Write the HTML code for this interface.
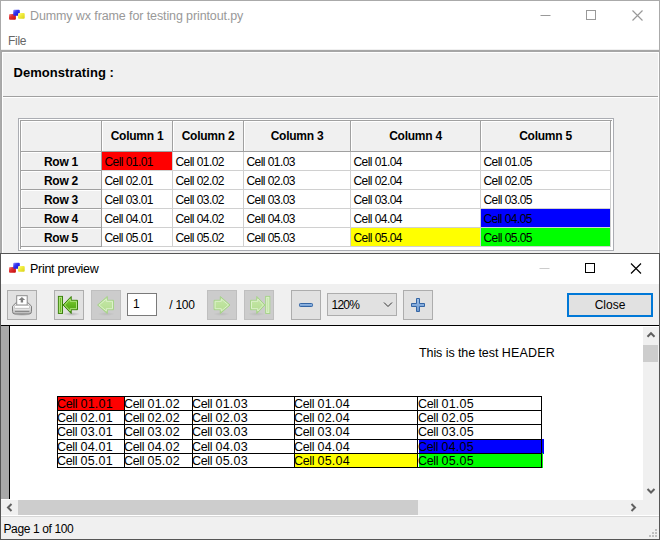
<!DOCTYPE html>
<html><head><meta charset="utf-8"><title>Print preview</title>
<style>
*{box-sizing:border-box;margin:0;padding:0}
html,body{width:660px;height:540px;overflow:hidden;background:#f0f0f0;font-family:"Liberation Sans",sans-serif;font-size:12px;color:#000}
.abs{position:absolute}
#w1{position:absolute;left:0;top:0;width:660px;height:253px;background:#f0f0f0;border-top:1px solid #aaa;border-left:1px solid #aaa;border-right:1px solid #aaa}
#t1{position:absolute;left:0;top:0;width:658px;height:50px;background:#fff}
.title{position:absolute;left:29px;top:8px;font-size:12.5px;color:#999;white-space:nowrap;letter-spacing:-0.11px}
.menu{position:absolute;left:7px;top:33px;font-size:12px;color:#666;letter-spacing:-0.3px}
.hline{position:absolute;height:1px;background:#a0a0a0}
#demo{position:absolute;left:12.5px;top:64px;letter-spacing:0.05px;font-weight:bold;font-size:13px;white-space:nowrap}
#grid{position:absolute;left:17px;top:117px;width:596px;height:133px;border:1px solid #abadb3;background:#fff}
#gin{position:absolute;left:1px;top:1px;width:592px;height:129px;background:#fff;border-left:1px solid #a0a0a0;border-top:1px solid #a0a0a0}
.gh{position:absolute;letter-spacing:-0.25px;background:#f0f0f0;box-shadow:inset 1px 1px 0 #fff;border-right:1px solid #a0a0a0;border-bottom:1px solid #a0a0a0;font-weight:bold;font-size:12px;text-align:center;white-space:nowrap}
.gc{position:absolute;background:#fff;border-right:1px solid #d0d0d0;border-bottom:1px solid #d0d0d0;font-size:12px;padding-left:2.5px;line-height:20px;white-space:nowrap;letter-spacing:-0.56px}
#w2{position:absolute;left:0;top:253px;width:660px;height:287px;background:#f0f0f0;border:1px solid #555}
#t2{position:absolute;left:0;top:0;width:658px;height:30px;background:#fff}
.tb{position:absolute;top:36px;width:30px;height:30px;border:1px solid #adadad;background:#e1e1e1}
.tb.dis{background:#cccccc;border-color:#bfbfbf}
.tb svg{position:absolute;left:0;top:0}
.pc{position:absolute;letter-spacing:-0.17px;font-size:12.5px;white-space:nowrap;line-height:14px;height:14px}
.pl{position:absolute;background:#000}
.pc .a{letter-spacing:-0.35px}.pc .b{letter-spacing:0.24px}
</style></head><body>
<div id="w1">
 <div id="t1"></div>
 <svg class="abs" style="left:8px;top:7px" width="18" height="16" viewBox="0 0 18 16">
  <defs>
   <linearGradient id="ir" x1="0" y1="0" x2="1" y2="1"><stop offset="0" stop-color="#f49a9a"/><stop offset="0.35" stop-color="#e03434"/><stop offset="1" stop-color="#c40808"/></linearGradient>
   <linearGradient id="ib" x1="0" y1="0" x2="1" y2="1"><stop offset="0" stop-color="#a0a0ff"/><stop offset="0.35" stop-color="#3838f0"/><stop offset="1" stop-color="#0808d8"/></linearGradient>
   <linearGradient id="iy" x1="0" y1="0" x2="1" y2="1"><stop offset="0" stop-color="#ffffb0"/><stop offset="0.35" stop-color="#f4f048"/><stop offset="1" stop-color="#d8d010"/></linearGradient>
  </defs>
  <rect x="0" y="6" width="6.900" height="5.800" rx="1" fill="url(#ir)"/>
  <rect x="4.200" y="1.800" width="6.600" height="6" rx="1" fill="url(#ib)"/>
  <rect x="9" y="4.900" width="6.700" height="5.900" rx="1" fill="url(#iy)"/>
 </svg>
 <div class="title">Dummy wx frame for testing printout.py</div>
 <svg class="abs" style="left:530px;top:-1px" width="128" height="30" viewBox="0 0 128 30">
  <g stroke="#999" stroke-width="1" fill="none">
   <path d="M9.5 15.5h10" stroke="#999"/><rect x="55.500" y="10.500" width="9" height="9"/><path d="M101.5 10.500l10 10M111.5 10.500l-10 10" stroke-width="1.150"/>
  </g>
 </svg>
 <div class="menu">File</div>
 <div class="abs" style="left:0;top:48px;width:658px;height:1px;background:#f0f0f0"></div>
 <div class="abs" style="left:0;top:49px;width:658px;height:2px;background:#a6a6a6"></div>
 <div class="abs" style="left:0;top:49px;width:1px;height:204px;background:#a6a6a6"></div>
 <div class="abs" style="left:1px;top:51px;width:657px;height:1px;background:#fff"></div>
 <div class="abs" style="left:1px;top:51px;width:1px;height:202px;background:#fff"></div>
 <div class="abs" style="left:657px;top:51px;width:1px;height:202px;background:#fff"></div>
 <div id="demo">Demonstrating :</div>
 <div class="hline" style="left:2px;top:95px;width:655px"></div>
 <div class="hline" style="left:2px;top:96px;width:655px;background:#fff"></div>
 <div id="grid"><div id="gin">
  <div class="gh" style="left:0;top:0;width:81px;height:31px"></div>
  <div class="gh" style="left:81px;top:0;width:71px;height:31px;line-height:30px">Column 1</div>
  <div class="gh" style="left:152px;top:0;width:71px;height:31px;line-height:30px">Column 2</div>
  <div class="gh" style="left:223px;top:0;width:107px;height:31px;line-height:30px">Column 3</div>
  <div class="gh" style="left:330px;top:0;width:130px;height:31px;line-height:30px">Column 4</div>
  <div class="gh" style="left:460px;top:0;width:130px;height:31px;line-height:30px">Column 5</div>
  <div class="gh" style="left:0;top:31px;width:81px;height:19px;line-height:20px">Row 1</div>
  <div class="gc" style="left:81px;top:31px;width:71px;height:19px;background:#ff0000">Cell 01.01</div>
  <div class="gc" style="left:152px;top:31px;width:71px;height:19px">Cell 01.02</div>
  <div class="gc" style="left:223px;top:31px;width:107px;height:19px">Cell 01.03</div>
  <div class="gc" style="left:330px;top:31px;width:130px;height:19px">Cell 01.04</div>
  <div class="gc" style="left:460px;top:31px;width:130px;height:19px">Cell 01.05</div>
  <div class="gh" style="left:0;top:50px;width:81px;height:19px;line-height:20px">Row 2</div>
  <div class="gc" style="left:81px;top:50px;width:71px;height:19px">Cell 02.01</div>
  <div class="gc" style="left:152px;top:50px;width:71px;height:19px">Cell 02.02</div>
  <div class="gc" style="left:223px;top:50px;width:107px;height:19px">Cell 02.03</div>
  <div class="gc" style="left:330px;top:50px;width:130px;height:19px">Cell 02.04</div>
  <div class="gc" style="left:460px;top:50px;width:130px;height:19px">Cell 02.05</div>
  <div class="gh" style="left:0;top:69px;width:81px;height:19px;line-height:20px">Row 3</div>
  <div class="gc" style="left:81px;top:69px;width:71px;height:19px">Cell 03.01</div>
  <div class="gc" style="left:152px;top:69px;width:71px;height:19px">Cell 03.02</div>
  <div class="gc" style="left:223px;top:69px;width:107px;height:19px">Cell 03.03</div>
  <div class="gc" style="left:330px;top:69px;width:130px;height:19px">Cell 03.04</div>
  <div class="gc" style="left:460px;top:69px;width:130px;height:19px">Cell 03.05</div>
  <div class="gh" style="left:0;top:88px;width:81px;height:19px;line-height:20px">Row 4</div>
  <div class="gc" style="left:81px;top:88px;width:71px;height:19px">Cell 04.01</div>
  <div class="gc" style="left:152px;top:88px;width:71px;height:19px">Cell 04.02</div>
  <div class="gc" style="left:223px;top:88px;width:107px;height:19px">Cell 04.03</div>
  <div class="gc" style="left:330px;top:88px;width:130px;height:19px">Cell 04.04</div>
  <div class="gc" style="left:460px;top:88px;width:130px;height:19px;background:#0000ff">Cell 04.05</div>
  <div class="gh" style="left:0;top:107px;width:81px;height:19px;line-height:20px">Row 5</div>
  <div class="gc" style="left:81px;top:107px;width:71px;height:19px">Cell 05.01</div>
  <div class="gc" style="left:152px;top:107px;width:71px;height:19px">Cell 05.02</div>
  <div class="gc" style="left:223px;top:107px;width:107px;height:19px">Cell 05.03</div>
  <div class="gc" style="left:330px;top:107px;width:130px;height:19px;background:#ffff00">Cell 05.04</div>
  <div class="gc" style="left:460px;top:107px;width:130px;height:19px;background:#00ff00">Cell 05.05</div>
 </div></div>
</div>
<div id="w2">
 <div id="t2"></div>
 <svg class="abs" style="left:8px;top:7px" width="18" height="16" viewBox="0 0 18 16">
  
  <rect x="0" y="6" width="6.900" height="5.800" rx="1" fill="url(#ir)"/>
  <rect x="4.200" y="1.800" width="6.600" height="6" rx="1" fill="url(#ib)"/>
  <rect x="9" y="4.900" width="6.700" height="5.900" rx="1" fill="url(#iy)"/>
 </svg>
 <div class="title" style="color:#000;letter-spacing:-0.29px">Print preview</div>
 <svg class="abs" style="left:529px;top:-1px" width="128" height="30" viewBox="0 0 128 30">
  <g stroke="#000" stroke-width="1" fill="none">
   <path d="M9.5 15.5h10" stroke="#ccc"/><rect x="55.500" y="10.500" width="9" height="9"/><path d="M101.0 10.500l10 10M111.0 10.500l-10 10" stroke-width="1.150"/>
  </g>
 </svg>
 <svg width="0" height="0" style="position:absolute"><defs>
<linearGradient id="gg" x1="0" y1="0" x2="0" y2="1"><stop offset="0" stop-color="#8ad63f"/><stop offset="0.5" stop-color="#62b620"/><stop offset="1" stop-color="#4a9e0e"/></linearGradient>
<linearGradient id="gd" x1="0" y1="0" x2="0" y2="1"><stop offset="0" stop-color="#c6e8a8"/><stop offset="1" stop-color="#b3dc90"/></linearGradient>
<linearGradient id="pb" x1="0" y1="0" x2="0" y2="1"><stop offset="0" stop-color="#f4f4f4"/><stop offset="0.6" stop-color="#d4d4d4"/><stop offset="1" stop-color="#b8b8b8"/></linearGradient>
<linearGradient id="bl" x1="0" y1="0" x2="0" y2="1"><stop offset="0" stop-color="#9fc0e8"/><stop offset="1" stop-color="#6a97cf"/></linearGradient>
<radialGradient id="sh"><stop offset="0" stop-color="#000" stop-opacity="0.25"/><stop offset="1" stop-color="#000" stop-opacity="0"/></radialGradient>
</defs></svg>
 <div class="tb" style="left:6px"><svg width="30" height="30" viewBox="0 0 30 30"><g transform="translate(-1,-1)"><ellipse cx="15" cy="24.300" rx="9" ry="1.800" fill="url(#sh)"/><path d="M5.500 16.200L9.300 12.500H20.700L24.500 16.200V21.500Q24.500 24 22 24H8Q5.500 24 5.500 21.500Z" fill="url(#pb)" stroke="#7e7e7e" stroke-width="1" stroke-linejoin="round"/><rect x="9.700" y="5.700" width="10.500" height="9.300" fill="#fff" stroke="#8c8c8c" stroke-width="1"/><path d="M14.900 6.900l3.300 3.100h-2.100v2.500h-2.400V10h-2.100z" fill="#808080"/><rect x="7.500" y="15.500" width="15" height="2.800" rx="0.800" fill="#fff" stroke="#a8a8a8" stroke-width="0.600"/><path d="M8 21.300h14.300" stroke="#7a7a7a" stroke-width="1"/><path d="M7.500 19.700h15.300" stroke="#fff" stroke-width="0.700" opacity="0.700"/></g></svg></div>
 <div class="tb" style="left:53px"><svg width="30" height="30" viewBox="0 0 30 30"><g transform="translate(-1,-1)"><ellipse cx="17.6" cy="24" rx="8.500" ry="2" fill="url(#sh)" opacity="0.8"/><path d="M9.1 15L17.20 6.500V10.300H23.50V19.700H17.20V23.500Z" fill="url(#gg)" stroke="#3a7f0d" stroke-width="1" stroke-linejoin="round"/><path d="M10.6 15L16.20 9V11.300H22.50V18.700H16.20V21Z" fill="none" stroke="#aee57e" stroke-width="1" stroke-linejoin="round"/><rect x="4.4" y="6.400" width="4.100" height="17" fill="#6cbd2b" stroke="#3a7f0d" stroke-width="1"/><rect x="5.4" y="7.400" width="2.100" height="15" fill="none" stroke="#aee57e" stroke-width="1"/></g></svg></div>
 <div class="tb dis" style="left:90px"><svg width="30" height="30" viewBox="0 0 30 30"><g transform="translate(-1,-1)"><ellipse cx="15.1" cy="24" rx="8.500" ry="2" fill="url(#sh)" opacity="0.35"/><path d="M6.6 15L16.30 6.500V10.300H22.50V19.700H16.30V23.500Z" fill="url(#gd)" stroke="#a6d389" stroke-width="1" stroke-linejoin="round"/><path d="M8.1 15L15.30 9V11.300H21.50V18.700H15.30V21Z" fill="none" stroke="#dcf1cb" stroke-width="1" stroke-linejoin="round"/></g></svg></div>
 <div class="abs" style="left:126px;top:39px;width:30px;height:23px;background:#fff;border:1px solid #7a7a7a;padding:3px 0 0 5px;font-size:12px">1</div>
 <div class="abs" style="left:168.300px;top:44px;font-size:12px;letter-spacing:-0.26px">/ 100</div>
 <div class="tb dis" style="left:206px"><svg width="30" height="30" viewBox="0 0 30 30"><g transform="translate(-1,-1)"><ellipse cx="14.5" cy="24" rx="8.500" ry="2" fill="url(#sh)" opacity="0.35"/><path d="M23.0 15L13.30 6.500V10.300H7.10V19.700H13.30V23.500Z" fill="url(#gd)" stroke="#a6d389" stroke-width="1" stroke-linejoin="round"/><path d="M21.5 15L14.30 9V11.300H8.10V18.700H14.30V21Z" fill="none" stroke="#dcf1cb" stroke-width="1" stroke-linejoin="round"/></g></svg></div>
 <div class="tb dis" style="left:243px"><svg width="30" height="30" viewBox="0 0 30 30"><g transform="translate(-1,-1)"><ellipse cx="12.399999999999999" cy="24" rx="8.500" ry="2" fill="url(#sh)" opacity="0.35"/><path d="M20.9 15L12.80 6.500V10.300H6.50V19.700H12.80V23.500Z" fill="url(#gd)" stroke="#a6d389" stroke-width="1" stroke-linejoin="round"/><path d="M19.4 15L13.80 9V11.300H7.50V18.700H13.80V21Z" fill="none" stroke="#dcf1cb" stroke-width="1" stroke-linejoin="round"/><rect x="21.7" y="6.400" width="4.100" height="17" fill="#c2e5a6" stroke="#a6d389" stroke-width="1"/><rect x="22.7" y="7.400" width="2.100" height="15" fill="none" stroke="#dcf1cb" stroke-width="1"/></g></svg></div>
 <div class="tb" style="left:290px"><svg width="30" height="30" viewBox="0 0 30 30"><g transform="translate(-1,-1)"><rect x="8.500" y="13.500" width="13" height="3" rx="0.800" fill="url(#bl)" stroke="#3465a4" stroke-width="1"/></g></svg></div>
 <div class="abs" style="left:326px;top:39px;width:70px;height:23px;background:#e1e1e1;border:1px solid #adadad;padding:4px 0 0 3.5px;font-size:12px;letter-spacing:-0.75px">120%</div>
 <svg class="abs" style="left:382px;top:47px" width="10" height="8"><path d="M1 1.500l4 4 4-4" stroke="#333" fill="none"/></svg>
 <div class="tb" style="left:402px"><svg width="30" height="30" viewBox="0 0 30 30"><g transform="translate(-1,-1)"><path d="M13.500 8.500h3v5h5v3h-5v5h-3v-5h-5v-3h5z" fill="url(#bl)" stroke="#3465a4" stroke-width="1" stroke-linejoin="round"/></g></svg></div>
 <div class="abs" style="left:566px;top:39px;width:86px;height:24px;background:#e1e1e1;border:2px solid #0078d7;text-align:center;font-size:12px;line-height:20px">Close</div>
 <div class="hline" style="left:0;top:71px;width:658px;background:#000"></div>
 <div class="abs" style="left:0;top:72px;width:8px;height:173px;background:#a9a9a9"></div>
 <div class="abs" style="left:8px;top:72px;width:1px;height:173px;background:#000"></div>
 <div class="abs" style="left:9px;top:72px;width:633px;height:173px;background:#fff"></div>
 <div class="abs" style="left:0;top:245px;width:658px;height:1px;background:#fff"></div>
 <div class="pc" style="left:418px;top:92px;letter-spacing:0"><span style="letter-spacing:-0.08px">This is the test</span> <span style="letter-spacing:0.2px">HEADER</span></div>
 <div class="abs" style="left:56px;top:142px;width:67px;height:15px;background:#ff0000"></div>
 <div class="abs" style="left:418px;top:185px;width:125px;height:15px;background:#0000ff"></div>
 <div class="abs" style="left:293px;top:199px;width:123px;height:15px;background:#ffff00"></div>
 <div class="abs" style="left:418px;top:199px;width:124px;height:15px;background:#00ff00"></div>
 <div class="pl" style="left:56px;top:142px;width:485px;height:1px"></div>
 <div class="pl" style="left:56px;top:156px;width:485px;height:1px"></div>
 <div class="pl" style="left:56px;top:170px;width:485px;height:1px"></div>
 <div class="pl" style="left:56px;top:185px;width:485px;height:1px"></div>
 <div class="pl" style="left:56px;top:199px;width:485px;height:1px"></div>
 <div class="pl" style="left:56px;top:213px;width:485px;height:1px"></div>
 <div class="pl" style="left:56px;top:142px;width:1px;height:72px"></div>
 <div class="pl" style="left:123px;top:142px;width:1px;height:72px"></div>
 <div class="pl" style="left:191px;top:142px;width:1px;height:72px"></div>
 <div class="pl" style="left:293px;top:142px;width:1px;height:72px"></div>
 <div class="pl" style="left:416px;top:142px;width:1px;height:72px"></div>
 <div class="pl" style="left:540px;top:142px;width:1px;height:72px"></div>
 <div class="pc" style="left:56px;top:142.5px"><span class="a">Cell</span> <span class="b">01.01</span></div>
 <div class="pc" style="left:123px;top:142.5px"><span class="a">Cell</span> <span class="b">01.02</span></div>
 <div class="pc" style="left:191px;top:142.5px"><span class="a">Cell</span> <span class="b">01.03</span></div>
 <div class="pc" style="left:293px;top:142.5px"><span class="a">Cell</span> <span class="b">01.04</span></div>
 <div class="pc" style="left:417px;top:142.5px"><span class="a">Cell</span> <span class="b">01.05</span></div>
 <div class="pc" style="left:56px;top:156.5px"><span class="a">Cell</span> <span class="b">02.01</span></div>
 <div class="pc" style="left:123px;top:156.5px"><span class="a">Cell</span> <span class="b">02.02</span></div>
 <div class="pc" style="left:191px;top:156.5px"><span class="a">Cell</span> <span class="b">02.03</span></div>
 <div class="pc" style="left:293px;top:156.5px"><span class="a">Cell</span> <span class="b">02.04</span></div>
 <div class="pc" style="left:417px;top:156.5px"><span class="a">Cell</span> <span class="b">02.05</span></div>
 <div class="pc" style="left:56px;top:170.5px"><span class="a">Cell</span> <span class="b">03.01</span></div>
 <div class="pc" style="left:123px;top:170.5px"><span class="a">Cell</span> <span class="b">03.02</span></div>
 <div class="pc" style="left:191px;top:170.5px"><span class="a">Cell</span> <span class="b">03.03</span></div>
 <div class="pc" style="left:293px;top:170.5px"><span class="a">Cell</span> <span class="b">03.04</span></div>
 <div class="pc" style="left:417px;top:170.5px"><span class="a">Cell</span> <span class="b">03.05</span></div>
 <div class="pc" style="left:56px;top:185.5px"><span class="a">Cell</span> <span class="b">04.01</span></div>
 <div class="pc" style="left:123px;top:185.5px"><span class="a">Cell</span> <span class="b">04.02</span></div>
 <div class="pc" style="left:191px;top:185.5px"><span class="a">Cell</span> <span class="b">04.03</span></div>
 <div class="pc" style="left:293px;top:185.5px"><span class="a">Cell</span> <span class="b">04.04</span></div>
 <div class="pc" style="left:417px;top:185.5px"><span class="a">Cell</span> <span class="b">04.05</span></div>
 <div class="pc" style="left:56px;top:199.5px"><span class="a">Cell</span> <span class="b">05.01</span></div>
 <div class="pc" style="left:123px;top:199.5px"><span class="a">Cell</span> <span class="b">05.02</span></div>
 <div class="pc" style="left:191px;top:199.5px"><span class="a">Cell</span> <span class="b">05.03</span></div>
 <div class="pc" style="left:293px;top:199.5px"><span class="a">Cell</span> <span class="b">05.04</span></div>
 <div class="pc" style="left:417px;top:199.5px"><span class="a">Cell</span> <span class="b">05.05</span></div>
 <div class="abs" style="left:642px;top:72px;width:16px;height:174px;background:#f0f0f0"></div>
 <div class="abs" style="left:642px;top:72px;width:16px;height:1px;background:#fff"></div>
 <div class="abs" style="left:642px;top:91px;width:15px;height:17px;background:#cdcdcd"></div>
 <svg class="abs" style="left:642px;top:72px" width="16" height="174" viewBox="0 0 16 174"><g fill="none" stroke="#606060" stroke-width="2"><path d="M4.500 10.700l3.500-3.500 3.500 3.500"/><path d="M4.500 163l3.500 3.500 3.500-3.500"/></g></svg>
 <div class="abs" style="left:0;top:246px;width:658px;height:15px;background:#f0f0f0"></div>
 <div class="abs" style="left:17px;top:246px;width:400px;height:15px;background:#cdcdcd"></div>
 <svg class="abs" style="left:0;top:246px" width="642" height="15" viewBox="0 0 642 15"><g fill="none" stroke="#606060" stroke-width="2"><path d="M10.500 4l-3.500 3.500 3.500 3.500"/><path d="M630.500 4l3.500 3.500-3.500 3.500"/></g></svg>
 <div class="abs" style="left:0;top:261px;width:658px;height:1px;background:#fff"></div>
 <div class="abs" style="left:0;top:262px;width:658px;height:1px;background:#d7d7d7"></div>
 <div class="abs" style="left:2.5px;top:268px;font-size:12px;letter-spacing:-0.38px">Page 1 of 100</div>
 <svg class="abs" style="left:646px;top:274px" width="12" height="12" viewBox="0 0 12 12"><g fill="#bfbfbf"><rect x="8" y="1" width="2" height="2"/><rect x="5" y="4" width="2" height="2"/><rect x="8" y="4" width="2" height="2"/><rect x="2" y="7" width="2" height="2"/><rect x="5" y="7" width="2" height="2"/><rect x="8" y="7" width="2" height="2"/></g></svg>
</div>
</body></html>
